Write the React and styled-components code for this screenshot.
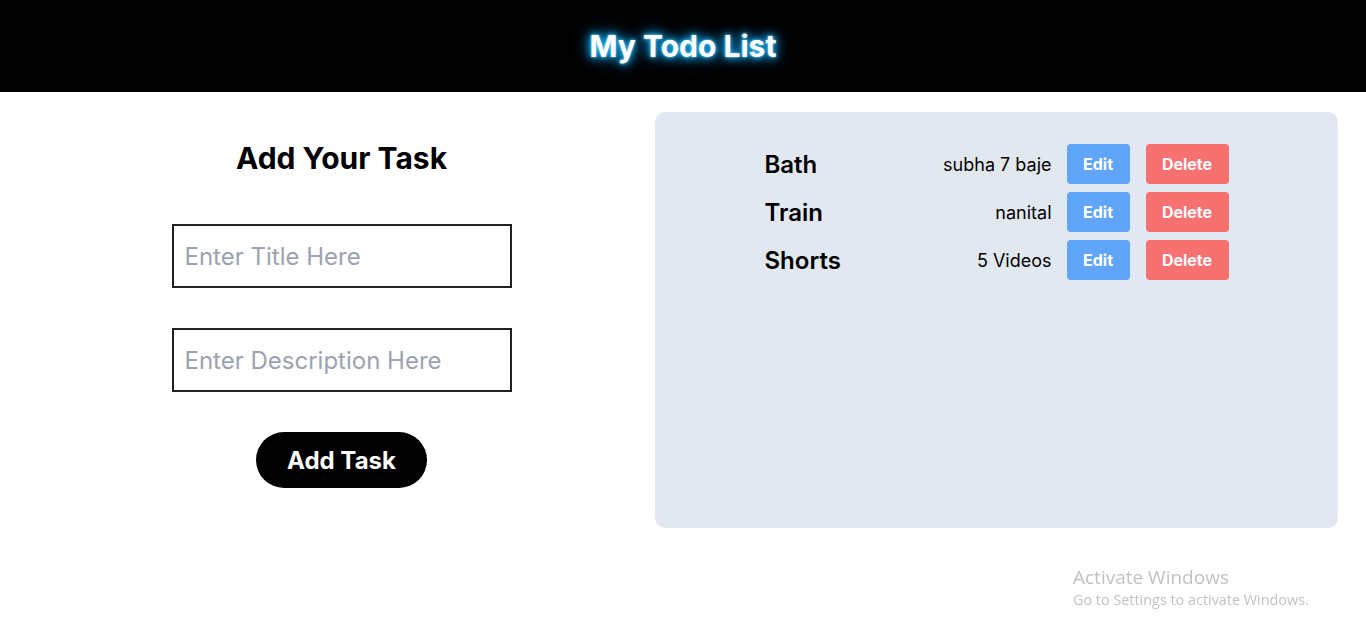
import React from 'react';
import styled, { createGlobalStyle } from 'styled-components';

const GlobalStyle = createGlobalStyle`
  * { box-sizing: border-box; }
  body {
    margin: 0;
    font-family: Inter, "Liberation Sans", sans-serif;
    background: #fff;
    color: #000;
  }
`;

const tasks = [
  { title: 'Bath', desc: 'subha 7 baje' },
  { title: 'Train', desc: 'nanital' },
  { title: 'Shorts', desc: '5 Videos' },
];

const App = () => (
  <>
    <GlobalStyle />
    <Header>
      <Brand>My Todo List</Brand>
    </Header>
    <Main>
      <FormColumn>
        <Heading>Add Your Task</Heading>
        <Field placeholder="Enter Title Here" />
        <Field placeholder="Enter Description Here" />
        <AddButton>Add Task</AddButton>
      </FormColumn>
      <Panel>
        {tasks.map((t) => (
          <Row key={t.title}>
            <Title>{t.title}</Title>
            <Desc>{t.desc}</Desc>
            <ActionButton color="#60a5fa" width={63}>Edit</ActionButton>
            <ActionButton color="#f87171" width={83}>Delete</ActionButton>
          </Row>
        ))}
      </Panel>
    </Main>
    <Watermark>
      <WmTitle>Activate Windows</WmTitle>
      <WmText>Go to Settings to activate Windows.</WmText>
    </Watermark>
  </>
);

const Header = styled.header`
  height: 92px;
  background: #000;
  display: flex;
  align-items: center;
  justify-content: center;
`;

const Brand = styled.h1`
  margin: 0;
  font-size: 30px;
  font-weight: 700;
  color: #fff;
  text-shadow: 0 0 3px #7dd3fc, 0 0 7px #0ea5e9, 0 0 12px #0ea5e9, 0 0 18px #0284c7;
`;

const Main = styled.main`
  display: flex;
  padding: 20px 28px;
`;

const FormColumn = styled.section`
  width: 627px;
  display: flex;
  flex-direction: column;
  align-items: center;
  gap: 40px;
  padding-top: 28px;
`;

const Heading = styled.h2`
  margin: 0 0 8px;
  font-size: 30px;
  line-height: 36px;
  font-weight: 700;
`;

const Field = styled.input`
  width: 340px;
  height: 64px;
  border: 2px solid #222;
  padding: 0 11px;
  font-family: inherit;
  font-size: 24px;
  outline: none;
  &::placeholder { color: #9ca3af; }
`;

const AddButton = styled.button`
  width: 171px;
  height: 56px;
  border: none;
  border-radius: 28px;
  background: #000;
  color: #fff;
  font-family: inherit;
  font-size: 24px;
  font-weight: 700;
`;

const Panel = styled.section`
  flex: 1;
  height: 416px;
  background: #e2e8f0;
  border-radius: 10px;
  padding-top: 32px;
  display: flex;
  flex-direction: column;
  align-items: center;
  gap: 8px;
`;

const Row = styled.div`
  display: flex;
  align-items: center;
  width: 464px;
  height: 40px;
`;

const Title = styled.span`
  width: 130px;
  font-size: 24px;
  font-weight: 600;
`;

const Desc = styled.span`
  width: 157px;
  text-align: right;
  font-size: 18px;
  margin-right: 15px;
`;

const ActionButton = styled.button`
  width: ${(p) => p.width}px;
  height: 40px;
  padding: 0;
  border: none;
  border-radius: 4px;
  background: ${(p) => p.color};
  color: #fff;
  font-family: inherit;
  font-size: 16px;
  font-weight: 700;
  & + & { margin-left: 16px; }
`;

const Watermark = styled.div`
  position: fixed;
  left: 1073px;
  top: 565px;
  color: #c2c2c2;
  font-family: "Open Sans", "Liberation Sans", sans-serif;
`;

const WmTitle = styled.div`
  font-size: 19px;
  line-height: 25px;
`;

const WmText = styled.div`
  font-size: 14.4px;
  line-height: 20px;
`;

export default App;
